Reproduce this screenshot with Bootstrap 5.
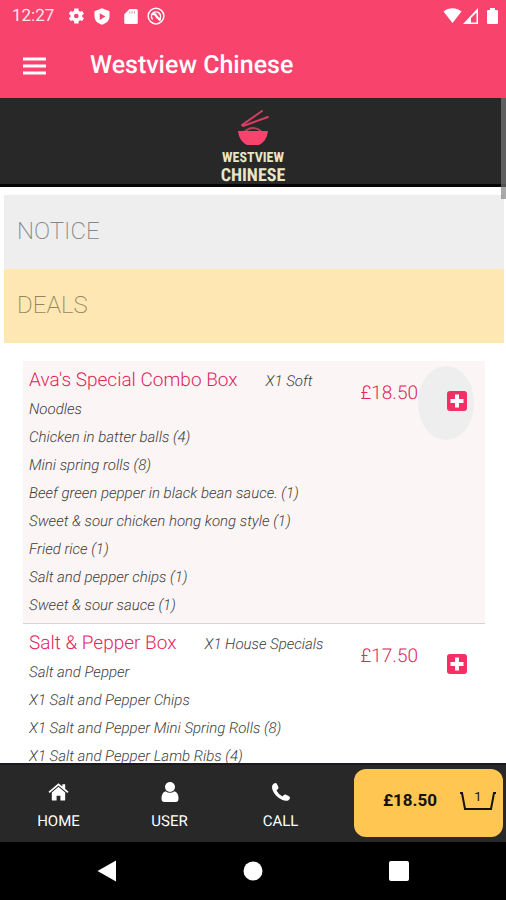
<!DOCTYPE html>
<html lang="en">
<head>
<meta charset="utf-8">
<meta name="viewport" content="width=device-width, initial-scale=1">
<title>Westview Chinese</title>
<link href="https://cdn.jsdelivr.net/npm/bootstrap@5.3.0/dist/css/bootstrap.min.css" rel="stylesheet">
<style>
  body { font-family: Roboto, "Liberation Sans", sans-serif; background: #fff; text-rendering: geometricPrecision; }
  svg { display: block; flex: none; }
  .pink-bar { background: #f8436d; color: #fff; }
  .status-line { height: 32px; font-size: 17px; }
  .status-time { padding-top: 2px; color: #ffe6ec; }
  .status-icons { gap: 7px; }
  .app-line { height: 66px; gap: 44px; padding: 2px 0 0 23px; }
  .app-title { font-size: 25px; font-weight: 500; line-height: 32px; }
  .brand-strip { background: #282828; border-top: 1px solid #3c1a22; border-bottom: 3px solid #050505; height: 89px; }
  .brand-name { font-family: "Liberation Sans Narrow", "Roboto Condensed", "Liberation Sans", sans-serif; font-weight: 700; color: #e9e6c6; }
  .brand-top { font-size: 14px; line-height: 18px; }
  .brand-bottom { font-size: 18px; line-height: 18px; }
  .scroll-thumb { width: 5px; height: 101px; background: rgba(125,125,125,.65); }
  .strip { height: 74px; font-size: 24px; font-weight: 200; color: #858585; padding: 0 13px 2px; text-align: left; }
  .strip-notice { background: #eee; }
  .strip-deals { background: #ffe7b3; color: #948561; }
  .strips { padding: 8px 2px 0 4px; }
  .menu-list { margin: 18px 21px 0 23px; }
  .dish { padding: 5px 6px 4px; border-bottom: 1px solid #d9d4d4; }
  .dish-active { background: #fbf5f5; }
  .dish-head { height: 29px; }
  .dish-title { font-size: 19px; line-height: 28px; color: #e2265a; font-weight: 300; }
  .dish-text { font-size: 15px; line-height: 28px; font-style: italic; font-weight: 300; color: #3c3c3c; }
  .dish-first { margin-left: 28px; }
  .price { font-size: 19px; font-weight: 300; line-height: 28px; color: #e2265a; margin-top: 13px; }
  .add-btn { width: 56px; height: 74px; border: 0; border-radius: 50%; background: transparent; padding: 0 0 4px 25px; margin-right: 5px; }
  .add-on { background: #eee; }
  .tabs { background: #282828; border-top: 2px solid #1b1b1f; height: 79px; }
  .tab-link { width: 111px; color: #fff; font-size: 15px; line-height: 20px; }
  .tab-icon { height: 20px; margin-bottom: 9px; }
  .tab-group { padding: 17px 16px 0 3px; }
  .cart { background: #ffc652; border: 0; border-radius: 12px; margin: 4px 3px 5px 0; width: 149px; font-size: 17px; font-weight: 700; color: #15120c; padding: 0 6px 4px 29px; }
  .basket { width: 38px; height: 22px; }
  .basket-count { font-size: 13px; font-weight: 400; line-height: 13px; }
  .sys-bar { background: #000; height: 58px; }
  .sys-bar button { width: 146px; border: 0; background: transparent; padding: 0; }
</style>
<script src="https://cdn.jsdelivr.net/npm/bootstrap@5.3.0/dist/js/bootstrap.bundle.min.js"></script>
</head>
<body>
<div class="vh-100 d-flex flex-column overflow-hidden">
  <header class="pink-bar flex-shrink-0">
    <div class="status-line d-flex align-items-center justify-content-between ps-2 pe-2">
      <div class="d-flex align-items-center ms-1">
        <span class="status-time me-2 pe-1">12:27</span>
        <div class="status-icons d-flex align-items-center">
          <svg width="20" height="20" viewBox="0 0 24 24" fill="#fff"><path fill-rule="evenodd" d="M19.400 13a7.500 7.500 0 0 0 0-2l2.100-1.600-2-3.500-2.500 1a7.300 7.300 0 0 0-1.700-1L15 3h-5l-.4 2.900a7.300 7.300 0 0 0-1.700 1l-2.500-1-2 3.500L5.500 11a7.500 7.500 0 0 0 0 2l-2.100 1.600 2 3.500 2.500-1a7.300 7.300 0 0 0 1.700 1L10 21h5l.3-2.900a7.300 7.300 0 0 0 1.700-1l2.500 1 2-3.500zM12.400 14.800a2.800 2.800 0 1 1 0-5.600 2.800 2.800 0 0 1 0 5.600z"/></svg>
          <svg width="18" height="19" viewBox="0 0 24 24"><path fill="#fff" d="M12 1 2 5v7c0 6 5 9.500 10 11 5-1.500 10-5 10-11V5z"/><path fill="#f8436d" d="M9 7.500v9l7.500-4.500z"/></svg>
          <svg class="ms-1" width="18" height="19" viewBox="0 0 24 24"><path fill="#fff" d="M10 2h9a2 2 0 0 1 2 2v16a2 2 0 0 1-2 2H5a2 2 0 0 1-2-2V9z"/><path stroke="#f8a0b4" stroke-width="1.500" d="M10.500 5v3M13.500 5v3M16.500 5v3"/></svg>
          <svg width="18" height="18" viewBox="0 0 24 24" fill="none" stroke="#fff" stroke-width="2"><circle cx="12" cy="12" r="10.500"/><path d="M7.500 16.500a6 6 0 1 1 9 0"/><path stroke-width="3" d="m7 9 4 1 2 3 5 5"/></svg>
        </div>
      </div>
      <div class="d-flex align-items-center">
        <svg width="19" height="18" viewBox="0 0 19 18"><path fill="#fff" d="M.5 4.500C6 .3 13 .3 18.500 4.500L9.500 16z"/></svg>
        <svg width="17" height="18" viewBox="0 0 17 18"><path fill="#fff" fill-rule="evenodd" d="M16 1v16H1zM14.500 5.500 9 11V15.500H14.500z"/></svg>
        <svg class="ms-2" width="11" height="18" viewBox="0 0 11 18"><path fill="#fff" d="M3 1h5v2h2q1 0 1 1v12q0 1-1 1H1q-1 0-1-1V4q0-1 1-1h2z"/></svg>
      </div>
    </div>
    <div class="app-line d-flex align-items-center">
      <button class="btn p-0 border-0" type="button" aria-label="Open menu">
        <svg width="23" height="18" viewBox="0 0 23 18" stroke="#fff" stroke-width="3"><path d="M0 2h23M0 9h23M0 16h23"/></svg>
      </button>
      <h1 class="app-title m-0">Westview Chinese</h1>
    </div>
  </header>

  <main class="flex-grow-1 overflow-hidden position-relative">
    <div class="scroll-thumb position-absolute top-0 end-0"></div>
    <div class="brand-strip d-flex flex-column align-items-center">
      <svg class="mt-2" width="34" height="42" viewBox="0 0 34 42">
        <g stroke="#d83e62" stroke-width="2" stroke-linecap="round"><path d="M6 18 26 4M7 19 32 10"/></g>
        <path d="M8 25q9-8 18 0" fill="none" stroke="#b93c5a" stroke-width="2"/>
        <path fill="#f8436d" d="M2 24h30q-1 10-9 14H11Q3 34 2 24z"/>
      </svg>
      <div class="brand-name text-center">
        <div class="brand-top">WESTVIEW</div>
        <div class="brand-bottom">CHINESE</div>
      </div>
    </div>

    <div class="strips">
      <button class="strip strip-notice w-100 border-0 d-block" type="button">NOTICE</button>
      <button class="strip strip-deals w-100 border-0 d-block" type="button">DEALS</button>
    </div>

    <div class="menu-list">
      <article class="dish dish-active d-flex align-items-start">
        <div class="flex-grow-1">
          <div class="dish-head d-flex align-items-baseline">
            <h2 class="dish-title m-0">Ava's Special Combo Box</h2>
            <span class="dish-text dish-first">X1 Soft</span>
          </div>
          <div class="dish-text">
            <div>Noodles</div>
            <div>Chicken in batter balls (4)</div>
            <div>Mini spring rolls (8)</div>
            <div>Beef green pepper in black bean sauce. (1)</div>
            <div>Sweet &amp; sour chicken hong kong style (1)</div>
            <div>Fried rice (1)</div>
            <div>Salt and pepper chips (1)</div>
            <div>Sweet &amp; sour sauce (1)</div>
          </div>
        </div>
        <span class="price">£18.50</span>
        <button class="add-btn add-on" type="button" aria-label="Add Ava's Special Combo Box">
          <svg class="ms-1" width="20" height="20" viewBox="0 0 20 20"><rect width="20" height="20" rx="3" fill="#f52f63"/><path stroke="#fff" stroke-width="4" d="M10 3.500v13M3.500 10h13"/></svg>
        </button>
      </article>
      <article class="dish d-flex align-items-start">
        <div class="flex-grow-1">
          <div class="dish-head d-flex align-items-baseline">
            <h2 class="dish-title m-0">Salt &amp; Pepper Box</h2>
            <span class="dish-text dish-first">X1 House Specials</span>
          </div>
          <div class="dish-text">
            <div>Salt and Pepper</div>
            <div>X1 Salt and Pepper Chips</div>
            <div>X1 Salt and Pepper Mini Spring Rolls (8)</div>
            <div>X1 Salt and Pepper Lamb Ribs (4)</div>
          </div>
        </div>
        <span class="price">£17.50</span>
        <button class="add-btn" type="button" aria-label="Add Salt &amp; Pepper Box">
          <svg class="ms-1" width="20" height="20" viewBox="0 0 20 20"><rect width="20" height="20" rx="3" fill="#f52f63"/><path stroke="#fff" stroke-width="4" d="M10 3.500v13M3.500 10h13"/></svg>
        </button>
      </article>
    </div>
  </main>

  <nav class="tabs flex-shrink-0 d-flex justify-content-between">
    <div class="tab-group d-flex">
      <a href="#" class="tab-link d-flex flex-column align-items-center text-decoration-none">
        <svg class="tab-icon" width="21" viewBox="0 0 22 20" fill="#fff"><path d="M11 4.500 18 10.500V18q0 1-1 1h-4v-5H9v5H5q-1 0-1-1v-7.500z"/><path d="m11 .8 4 3.400V2h3v4.700l3.500 3-1.200 1.400L11 3.200l-9.300 7.900L.5 9.700z"/></svg>
        HOME
      </a>
      <a href="#" class="tab-link d-flex flex-column align-items-center text-decoration-none">
        <svg class="tab-icon" width="18" viewBox="0 0 18 20" fill="#fff"><circle cx="9" cy="5" r="5"/><path d="M4.500 9.200Q9 12.500 13.500 9.200q4 1.300 4 7.300 0 3.500-3 3.500h-11q-3 0-3-3.500 0-6 4-7.300z"/></svg>
        USER
      </a>
      <a href="#" class="tab-link d-flex flex-column align-items-center text-decoration-none">
        <svg class="tab-icon" width="20" viewBox="0 0 20 20" fill="#fff"><path d="M1.500 3Q3 .8 5 1q1 .5 2.500 4.500Q7.500 7 5.500 8.500q2 4 6 6Q13 12.300 14.500 12.500q4 1.500 4.500 2.700 0 2-1.500 3-2.500 1.500-7-.7Q5 15 2.500 10 .2 6 1.500 3z"/></svg>
        CALL
      </a>
    </div>
    <button class="cart d-flex align-items-center justify-content-between" type="button">
      <span>£18.50</span>
      <span class="basket position-relative text-center">
        <svg class="position-absolute top-0 start-0" width="38" height="22" viewBox="0 0 38 22" fill="none" stroke="#15120c" stroke-width="2"><path d="M1 3h2l3 16h26l3-16h2"/></svg>
        <span class="basket-count d-block">1</span>
      </span>
    </button>
  </nav>

  <footer class="sys-bar flex-shrink-0 d-flex justify-content-center">
    <button type="button" aria-label="Back"><svg class="mx-auto" width="20" height="22" viewBox="0 0 20 22"><path fill="#fff" d="M19 .5v21L.5 11z"/></svg></button>
    <button type="button" aria-label="Home"><svg class="mx-auto" width="20" height="20" viewBox="0 0 20 20"><circle cx="10" cy="10" r="9.500" fill="#fff"/></svg></button>
    <button type="button" aria-label="Recent apps"><svg class="mx-auto" width="20" height="20" viewBox="0 0 20 20"><rect width="20" height="20" rx="2" fill="#fff"/></svg></button>
  </footer>
</div>
</body>
</html>
